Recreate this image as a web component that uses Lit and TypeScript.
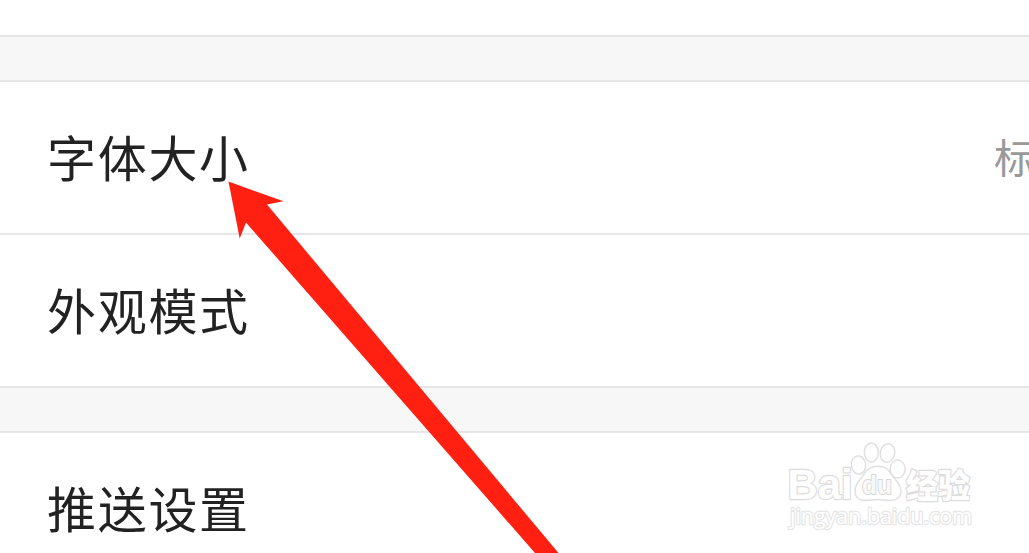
import { LitElement, css, html, svg } from "lit";
import { customElement, property } from "lit/decorators.js";

/** One line of the settings list: a label and an optional value. */
@customElement("settings-row")
export class SettingsRow extends LitElement {
  static styles = css`
    :host {
      display: flex;
      align-items: center;
      justify-content: space-between;
      box-sizing: border-box;
      height: 151px;
      padding: 0 0 4px 47px;
      background: #fff;
      white-space: nowrap;
    }
    .label {
      font-size: 49px;
      line-height: 70px;
      letter-spacing: 1.7px;
      color: #222;
    }
    .value {
      width: 35px;
      overflow: hidden;
      font-size: 40px;
      line-height: 60px;
      color: #999;
    }
  `;

  @property() label = "";
  @property() value = "";

  render() {
    return html`
      <span class="label">${this.label}</span>
      ${this.value ? html`<span class="value">${this.value}</span>` : ""}
    `;
  }
}

/** Outlined Baidu Jingyan mark with the paw and the site address. */
@customElement("site-watermark")
export class SiteWatermark extends LitElement {
  static styles = css`
    :host {
      display: block;
    }
    svg {
      display: block;
    }
    .mark {
      fill: #fff;
      stroke: #dcdcdc;
      stroke-width: 2.4;
      stroke-linejoin: round;
      paint-order: stroke;
    }
    .paw {
      fill: #fff;
      stroke: #e0e0e0;
      stroke-width: 1.5;
    }
    .latin {
      font: 700 42px "Liberation Sans", sans-serif;
    }
    .du {
      font: 700 25px "Liberation Sans", sans-serif;
      fill: #f8f8f8;
      stroke: #d6d6d6;
      stroke-width: 1.8;
    }
    .cjk {
      font: 900 33px "Noto Sans CJK SC", sans-serif;
    }
    .url {
      font: 400 21.5px "Open Sans", sans-serif;
      stroke: #e6e6e6;
    }
  `;

  render() {
    const toes = [
      [78.5, 35, 7.2, 9.2, -8],
      [91.3, 22.5, 7, 9.6, 0],
      [107.5, 23, 7.2, 9.4, 10],
      [117.7, 39, 7.5, 9, 0],
    ];
    return html`
      <svg width="200" height="110" viewBox="0 0 200 110">
        <path
          class="paw"
          d="M98 36.3 C91 36.3 87 39 84 44 C81 50 75 53 75 61 C75 67 79 70.5 85 70.5 C90 70.5 93 69.5 98 69.5 C103 69.5 106 70.8 111 70.5 C117 70 121 67 121 61 C121 54 115 50 112 45 C108 39 105 36.3 98 36.3 Z"
        />
        ${toes.map(
          ([x, y, rx, ry, turn]) => svg`
            <ellipse class="paw" cx=${x} cy=${y} rx=${rx} ry=${ry} transform="rotate(${turn} ${x} ${y})" />
          `,
        )}
        <text class="mark latin" x="7.5" y="69.3" textLength="65" lengthAdjust="spacingAndGlyphs">Bai</text>
        <text class="mark du" x="82" y="64.3" textLength="30" lengthAdjust="spacingAndGlyphs">du</text>
        <text class="mark cjk" x="126" y="67.5" textLength="64" lengthAdjust="spacingAndGlyphs">经验</text>
        <text class="mark url" x="10" y="93.5" textLength="182" lengthAdjust="spacingAndGlyphs">jingyan.baidu.com</text>
      </svg>
    `;
  }
}

@customElement("app-root")
export class AppRoot extends LitElement {
  static styles = css`
    :host {
      display: block;
      position: relative;
      width: 1029px;
      height: 553px;
      overflow: hidden;
      background: #fff;
      font-family: "Noto Sans CJK SC", sans-serif;
    }
    .page {
      display: flex;
      flex-direction: column;
    }
    .previous {
      height: 35px;
    }
    .gap {
      height: 43px;
      border-top: 2px solid #e6e6e6;
      border-bottom: 2px solid #e6e6e6;
      background: #f7f7f7;
    }
    .divider {
      height: 2px;
      background: #e6e6e6;
    }
    .watermark {
      position: absolute;
      left: 780px;
      top: 430px;
    }
    .arrow {
      position: absolute;
      inset: 0;
      pointer-events: none;
    }
  `;

  render() {
    return html`
      <div class="page">
        <div class="previous"></div>
        <div class="gap"></div>
        <settings-row label="字体大小" value="标"></settings-row>
        <div class="divider"></div>
        <settings-row label="外观模式"></settings-row>
        <div class="gap"></div>
        <settings-row label="推送设置"></settings-row>
      </div>
      <site-watermark class="watermark"></site-watermark>
      <svg class="arrow" width="1029" height="553" viewBox="0 0 1029 553">
        <polygon
          fill="#ff2012"
          points="228.5,181.5 283.5,201.3 267,204.5 558.5,553 535,553 246,222.5 239.7,238.5"
        />
      </svg>
    `;
  }
}
